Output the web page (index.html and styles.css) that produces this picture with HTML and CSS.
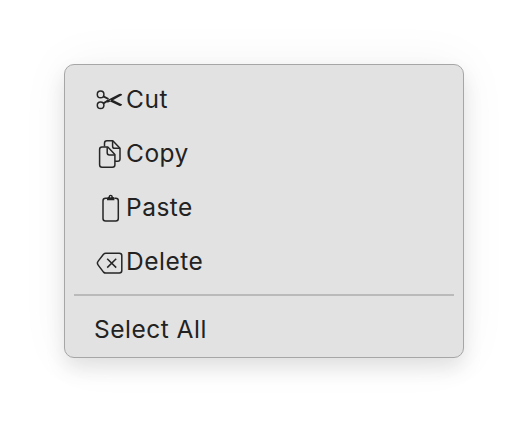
FILE: index.html
```html
<!DOCTYPE html>
<html lang="en">
<head>
  <meta charset="UTF-8">
  <meta name="viewport" content="width=device-width, initial-scale=1.0">
  <title>Context Menu</title>
  <link rel="stylesheet" href="styles.css">
</head>
<body>

  <div class="menu">
    <div class="menu-item">
      <svg class="icon" viewBox="0 0 32 32">
        <circle cx="6.6" cy="10.4" r="3.3" />
        <circle cx="6.6" cy="21.3" r="3.3" />
        <path class="handle" d="M9.4 12.3L14.5 15M9.4 19.4L14.5 16.3" />
        <path class="solid" d="M12.5 16.4L25.2 10Q27.6 9.2 28.2 10.9L17 17.2L13.5 18.7ZM16 16.1L18 15.6L28.2 20.5Q27.4 22.5 25.2 21.7L15 17Z" />
        <circle class="pivot" cx="16.3" cy="16.5" r="0.7" />
      </svg>
      <span>Cut</span>
    </div>
    <div class="menu-item">
      <svg class="icon" viewBox="0 0 32 32">
        <path d="M10.5 8.5V5.2Q10.5 2.8 12.9 2.8H18.8L26 10.3V21Q26 23.3 23.7 23.3H21" />
        <path d="M18.6 3V8.2Q18.6 10.3 20.7 10.3H26" />
        <path class="front" d="M8 9.1H13.8L20.9 16.5V26.7Q20.9 29.2 18.4 29.2H8Q5.6 29.2 5.6 26.7V11.6Q5.6 9.1 8 9.1Z" />
        <path d="M13.2 9.3V14.8Q13.2 17 15.4 17H20.8" />
      </svg>
      <span>Copy</span>
    </div>
    <div class="menu-item">
      <svg class="icon" viewBox="0 0 32 32">
        <path d="M13 6.2H11.5Q9 6.2 9 8.7V26.6Q9 29.1 11.5 29.1H21.8Q24.3 29.1 24.3 26.6V8.7Q24.3 6.2 21.8 6.2H20.4" />
        <path class="solid" fill-rule="evenodd" d="M13 8.3V6.2Q13 5 14.4 5Q14.8 2.8 16.7 2.8T19 5Q20.4 5 20.4 6.2V8.3ZM16.7 4.1A.7.7 0 1 0 16.7 5.5A.7.7 0 1 0 16.7 4.1Z" />
      </svg>
      <span>Paste</span>
    </div>
    <div class="menu-item">
      <svg class="icon" viewBox="0 0 32 32">
        <path d="M11.8 7.2H25.3Q27.8 7.2 27.8 9.7V24.6Q27.8 27.1 25.3 27.1H11.8Q10.5 27.1 9.5 26.1L4.2 19.1Q2.6 17.1 4.2 15.1L9.5 8.2Q10.5 7.2 11.8 7.2Z" />
        <path d="M13.2 12.7L22.2 21.6M22.2 12.7L13.2 21.6" />
      </svg>
      <span>Delete</span>
    </div>
    <div class="separator"></div>
    <div class="menu-item">
      <span>Select All</span>
    </div>
  </div>

</body>
</html>
```
FILE: styles.css
```css
body {
  margin: 0;
  padding: 64px;
  background-color: #fff;
  font-family: Inter, "Liberation Sans", sans-serif;
}

.menu {
  box-sizing: border-box;
  width: 400px;
  height: 294px;
  padding: 8px 9px;
  border: 1px solid #a6a6a6;
  border-radius: 10px;
  background-color: #e2e2e2;
  box-shadow: 0 10px 20px rgba(0, 0, 0, 0.1), 0 0 50px rgba(0, 0, 0, 0.05);
}

.menu-item {
  display: flex;
  align-items: center;
  height: 54px;
  padding: 0 20px;
  color: #222;
  font-size: 24.5px;
  letter-spacing: 0.5px;
}

.menu-item span {
  padding-bottom: 3px;
}

.icon {
  width: 32px;
  height: 32px;
  fill: none;
  stroke: #262626;
  stroke-width: 1.5;
  stroke-linejoin: round;
}

.icon .solid {
  fill: #222;
  stroke: none;
}

.icon .handle {
  stroke-width: 1.9;
}

.icon .pivot {
  fill: #999;
  stroke: none;
}

.icon .front {
  fill: #e2e2e2;
}

.separator {
  height: 2px;
  margin: 5px 0 7px;
  background-color: #bababa;
}
```
